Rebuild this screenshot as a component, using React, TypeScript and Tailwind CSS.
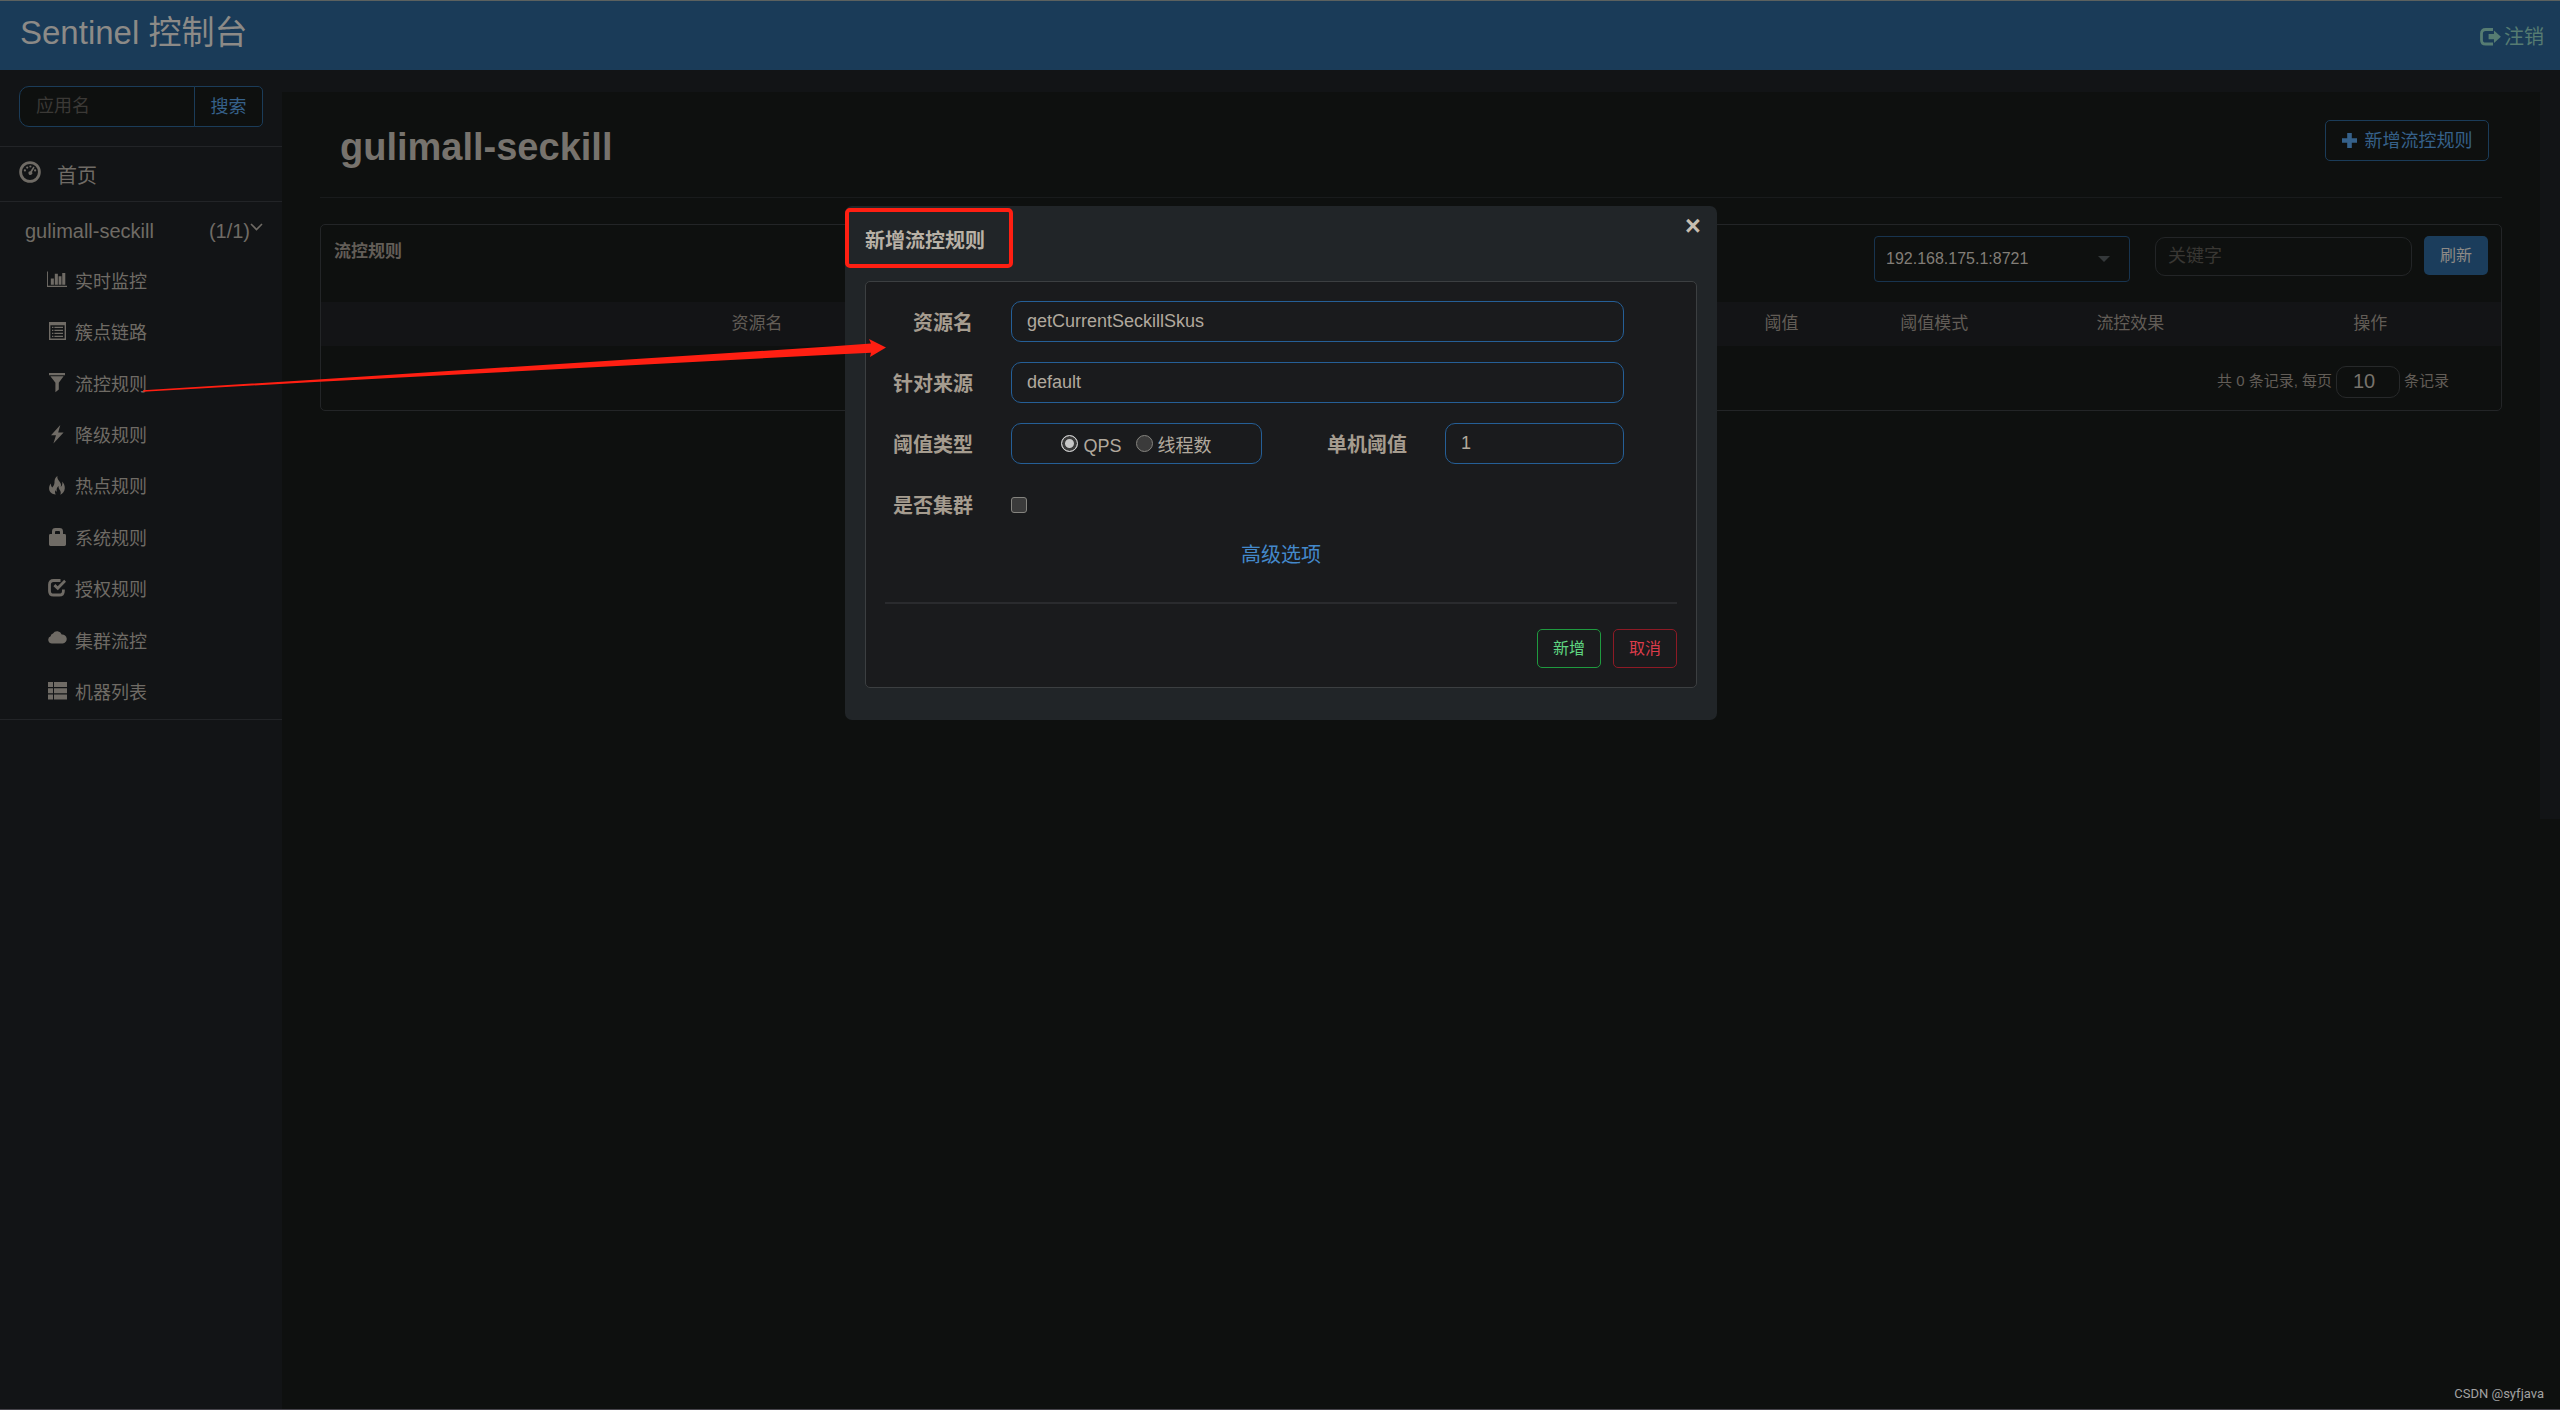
import React, { useState } from 'react';

type IconProps = { className?: string };

const DashboardIcon = ({ className }: IconProps) => (
  <svg viewBox="0 0 22 22" className={className} fill="currentColor" aria-hidden="true">
    <circle cx="11" cy="11" r="9.4" fill="none" stroke="currentColor" strokeWidth="2.8" />
    <circle cx="5.9" cy="9.4" r="1.1" />
    <circle cx="8.2" cy="6.6" r="1.1" />
    <circle cx="11.4" cy="5.5" r="1.1" />
    <circle cx="16.1" cy="9.4" r="1.1" />
    <path d="M14.4 5.6l1.2.9-2.6 4.6a1.9 1.9 0 1 1-1.7-.9z" />
  </svg>
);

const StatsIcon = ({ className }: IconProps) => (
  <svg viewBox="0 0 21 17" className={className} fill="currentColor" aria-hidden="true">
    <path d="M0 0h1v15h20v1.4H0zM4 7.5h3.2V14H4zM8.2 2.5h3.2V14H8.2zM12.2 5.2h3V14h-3zM16 1.8h3.2V14H16z" />
  </svg>
);

const ListAltIcon = ({ className }: IconProps) => (
  <svg viewBox="0 0 17 18" className={className} fill="currentColor" aria-hidden="true">
    <path fillRule="evenodd" d="M0 0h17v18H0zM1.4 3.2v13.4h14.2V3.2z" />
    <path d="M3 4.7h1.4v1.4H3zM5.4 4.7H14v1.4H5.4zM3 7.7h1.4v1.4H3zM5.4 7.7H14v1.4H5.4zM3 10.7h1.4v1.4H3zM5.4 10.7H14v1.4H5.4zM3 13.7h1.4v1.4H3zM5.4 13.7H14v1.4H5.4z" />
  </svg>
);

const FilterIcon = ({ className }: IconProps) => (
  <svg viewBox="0 0 16 20" className={className} fill="currentColor" aria-hidden="true">
    <path d="M0 0h16v2.2H0zM1.4 3.2h13.2L9.8 9.8v6.6l-3.4 2.8V9.8z" />
  </svg>
);

const FlashIcon = ({ className }: IconProps) => (
  <svg viewBox="0 0 13 19" className={className} fill="currentColor" aria-hidden="true">
    <path d="M9.3 0L0 10.2h5L2.4 18.6 12.6 7.4H7.2z" />
  </svg>
);

const FireIcon = ({ className }: IconProps) => (
  <svg viewBox="0 0 16 19" className={className} fill="currentColor" aria-hidden="true">
    <path d="M8.4 0c-.4 2.2.6 3.6 1.9 5.2 1.6 2 2.2 3.2 1.4 5.6 1.5-1.1 2-3.2 1.5-5.4 1.6 1.7 2.8 4.2 2.6 6.9-.2 3.2-2 5.4-4.6 6.5.8-1.6.8-3.3-.6-5.1-.9-1.2-1.2-2.2-.9-3.6-1.7 1.2-2.5 3.1-1.9 5.4-.8-.2-1.2-.8-1.3-1.6-.7 1.6-.6 3.2.3 4.7C2.9 18 .3 16 .1 12.7 0 10.5.8 9 1.8 7.6c.1 1.7.5 3 1.5 3.9C5.2 9.5 5.6 7.7 5.5 5.5 5.6 3.2 6.6 1.2 8.4 0z" />
  </svg>
);

const LockIcon = ({ className }: IconProps) => (
  <svg viewBox="0 0 17 18" className={className} fill="currentColor" aria-hidden="true">
    <path fillRule="evenodd" d="M3 6V3.4Q3 0 6.4 0h4.2Q14 0 14 3.4V6h1.6q1.4 0 1.4 1.4v9.2q0 1.4-1.4 1.4H1.4Q0 18 0 16.6V7.4Q0 6 1.4 6zm3 0h5V4q0-1-1-1H7Q6 3 6 4z" />
  </svg>
);

const CheckIcon = ({ className }: IconProps) => (
  <svg viewBox="0 0 18 18" className={className} fill="currentColor" aria-hidden="true">
    <path d="M12.5 1.5H5.6Q1.5 1.5 1.5 5.6v6.3q0 4.1 4.1 4.1h5.7q4.1 0 4.1-4.1v-1.4" fill="none" stroke="currentColor" strokeWidth="2.8" />
    <path d="M16.2.8L18 2.7l-8.2 8.6-4.4-4 1.900-2.200 2.400 2.200z" />
  </svg>
);

const CloudIcon = ({ className }: IconProps) => (
  <svg viewBox="0 0 19 13" className={className} fill="currentColor" aria-hidden="true">
    <path d="M4 12.5a3.8 3.8 0 0 1-1.4-7.3A3 3 0 0 1 5 2.5 4.9 4.9 0 0 1 13.7 3.5 4.5 4.5 0 1 1 14.7 12.5z" />
  </svg>
);

const ThListIcon = ({ className }: IconProps) => (
  <svg viewBox="0 0 19 18" className={className} fill="currentColor" aria-hidden="true">
    <path d="M0 0h5v5H0zM6 0h13v5H6zM0 6.3h5v5H0zM6 6.3h13v5H6zM0 12.6h5v5H0zM6 12.6h13v5H6z" />
  </svg>
);

const LogoutIcon = ({ className }: IconProps) => (
  <svg viewBox="0 0 21 18" className={className} fill="currentColor" aria-hidden="true">
    <path d="M13 1.5H5.6Q1.5 1.5 1.5 5.6v6.3q0 4.1 4.1 4.1H13" fill="none" stroke="currentColor" strokeWidth="2.8" />
    <path d="M14 2.4l6.9 6.3-6.9 6.2v-3.7H8.6V6.1H14z" />
  </svg>
);

const PlusIcon = ({ className }: IconProps) => (
  <svg viewBox="0 0 15 15" className={className} fill="currentColor" aria-hidden="true">
    <path d="M5.2 0h4.6v5.2H15v4.6H9.800V15H5.200V9.800H0V5.200h5.200z" />
  </svg>
);

const MENU = [
  { label: '实时监控', icon: <StatsIcon className="h-[17px] w-[21px]" /> },
  { label: '簇点链路', icon: <ListAltIcon className="h-[18px] w-[17px]" /> },
  { label: '流控规则', icon: <FilterIcon className="h-5 w-4" /> },
  { label: '降级规则', icon: <FlashIcon className="h-[19px] w-[13px]" /> },
  { label: '热点规则', icon: <FireIcon className="h-[19px] w-4" /> },
  { label: '系统规则', icon: <LockIcon className="h-[18px] w-[17px]" /> },
  { label: '授权规则', icon: <CheckIcon className="h-[18px] w-[18px]" /> },
  { label: '集群流控', icon: <CloudIcon className="mb-1 h-[13px] w-[19px]" /> },
  { label: '机器列表', icon: <ThListIcon className="h-[18px] w-[19px]" /> },
];

const COLUMNS = [
  { label: '资源名', width: 'w-[40%]' },
  { label: '', width: 'w-[24%]' },
  { label: '阈值', width: 'w-[6%]' },
  { label: '阈值模式', width: 'w-[8%]' },
  { label: '流控效果', width: 'w-[10%]' },
  { label: '操作', width: 'w-[12%]' },
];

const Sidebar = () => (
  <aside className="w-[282px] shrink-0 bg-[#121416] text-[#6f6b65]">
    <form className="flex px-[19px] pt-4 pb-[19px]" onSubmit={(e) => e.preventDefault()}>
      <input
        type="text"
        aria-label="应用名"
        placeholder="应用名"
        className="h-[41px] w-44 rounded-l-[10px] border border-[#1b3c59] bg-[#0e100f] px-4 text-lg outline-none placeholder:text-[#3b3936]"
      />
      <button type="submit" className="-ml-px h-[41px] flex-1 rounded-r-[5px] border border-[#1b3c59] bg-[#0e100f] text-lg text-[#36618a]">
        搜索
      </button>
    </form>
    <a href="#home" className="flex h-14 items-center border-y border-[#222427] pl-[19px] text-xl">
      <DashboardIcon className="mb-1 h-[22px] w-[22px]" />
      <span className="ml-4 pt-1">首页</span>
    </a>
    <a href="#app" className="flex h-[54px] items-center pt-1 pr-[19px] pl-[25px] text-xl">
      <span className="flex-1">gulimall-seckill</span>
      <span>(1/1)</span>
      <svg viewBox="0 0 13 8" className="mb-2 h-2 w-[13px]" fill="none" stroke="currentColor" strokeWidth="1.6" aria-hidden="true">
        <path d="M1 1l5.5 5.5L12 1" />
      </svg>
    </a>
    <ul className="flex h-[464px] flex-col border-b border-[#222427] text-lg">
      {MENU.map((item) => (
        <li key={item.label} className="flex-1">
          <a href={`#${item.label}`} className="flex h-full items-center pl-[47px]">
            <span className="flex w-5 justify-center pb-1">{item.icon}</span>
            <span className="ml-2">{item.label}</span>
          </a>
        </li>
      ))}
    </ul>
  </aside>
);

const RulesPanel = () => (
  <section className="mt-[26px] rounded-[5px] border border-[#232527]">
    <div className="flex h-[77px] items-start pt-[11px] pr-[13px] pl-[13px]">
      <h2 className="mt-1 flex-1 text-[17px] leading-6 font-bold text-[#625d57]">流控规则</h2>
      <div className="relative">
        <select aria-label="机器" className="h-[46px] w-64 appearance-none rounded-[4px] border border-[#18344f] bg-[#0e100f] px-[11px] text-base text-[#827e77] outline-none">
          <option>192.168.175.1:8721</option>
        </select>
        <svg viewBox="0 0 12 6" className="pointer-events-none absolute top-5 right-5 h-[6px] w-3" fill="#34383a" aria-hidden="true">
          <path d="M0 0h12L6 6z" />
        </svg>
      </div>
      <input
        type="text"
        aria-label="关键字"
        placeholder="关键字"
        className="mt-px ml-[25px] h-[39px] w-[257px] rounded-[10px] border border-[#232527] bg-transparent px-3 pb-px text-lg outline-none placeholder:text-[#393733]"
      />
      <button type="button" className="ml-3 h-[39px] w-16 rounded-[5px] bg-[#1b3d5c] text-base text-[#8d8a86]">
        刷新
      </button>
    </div>
    <table className="w-full table-fixed text-[17px] text-[#625d57]">
      <thead>
        <tr className="h-11 bg-[#131416]">
          {COLUMNS.map((col, i) => (
            <th key={i} scope="col" className={`${col.width} p-0 font-normal`}>
              {col.label}
            </th>
          ))}
        </tr>
      </thead>
    </table>
    <div className="flex h-16 items-center justify-end pt-[7px] pr-[52px] text-[15px] text-[#625d57]">
      <label htmlFor="pageSize">共 0 条记录, 每页</label>
      <input id="pageSize" type="text" defaultValue="10" className="mr-1 ml-1 h-8 w-16 rounded-[10px] border border-[#27292a] bg-transparent px-4 text-xl text-[#77736c] outline-none" />
      <span>条记录</span>
    </div>
  </section>
);

const fieldClass = 'h-[41px] rounded-[10px] border border-[#255f97] bg-transparent px-[15px] pb-px text-lg text-[#b1a99d] outline-none';
const labelClass = 'pt-2 pr-[38px] text-right text-xl font-bold text-[#a59c8f]';
const radioClass = 'h-[17px] w-[17px] appearance-none rounded-full border border-[#85847f] bg-[#3b3b3b] checked:border-[#cfcfcf] checked:bg-[#c8c8c8] checked:shadow-[inset_0_0_0_3px_#3b3b3b]';

const NewRuleDialog = () => {
  const [grade, setGrade] = useState('QPS');
  const [resource, setResource] = useState('getCurrentSeckillSkus');
  const [origin, setOrigin] = useState('default');

  return (
    <div className="absolute inset-x-0 top-0 flex justify-center pt-[206px] pl-0.5">
      <div role="dialog" aria-labelledby="dialogTitle" className="relative w-[872px] rounded-[7px] bg-[#212528] px-5 pb-8">
        <div className="absolute top-[2px] left-0 h-[60px] w-[168px] rounded-[5px] border-4 border-[#ff1f12]" />
        <button type="button" aria-label="关闭" className="absolute top-[5px] right-[12px] h-[30px] w-6 text-[27px] leading-[30px] font-bold text-[#c6bdb0]">
          ×
        </button>
        <h3 id="dialogTitle" className="h-[75px] pt-[21px] text-xl leading-7 font-bold text-[#b8b1a6]">新增流控规则</h3>
        <form className="rounded-[5px] border border-[#3c3f41] bg-[#1a1b1d] px-[19px] pt-[19px] pb-[19px]" onSubmit={(e) => e.preventDefault()}>
          <div className="grid grid-cols-[126px_251px_183px_179px] gap-y-5">
            <label htmlFor="resource" className={labelClass}>资源名</label>
            <input id="resource" type="text" value={resource} onChange={(e) => setResource(e.target.value)} className={`${fieldClass} col-span-3`} />
            <label htmlFor="origin" className={labelClass}>针对来源</label>
            <input id="origin" type="text" value={origin} onChange={(e) => setOrigin(e.target.value)} className={`${fieldClass} col-span-3`} />
            <span id="gradeLabel" className={labelClass}>阈值类型</span>
            <div role="radiogroup" aria-labelledby="gradeLabel" className="flex h-[41px] items-center justify-center rounded-[10px] border border-[#255f97] text-lg text-[#b1a99d]">
              <input id="gradeQps" type="radio" name="grade" checked={grade === 'QPS'} onChange={() => setGrade('QPS')} className={radioClass} />
              <label htmlFor="gradeQps" className="ml-[5px] pt-[5px]">QPS</label>
              <input id="gradeThread" type="radio" name="grade" checked={grade === 'THREAD'} onChange={() => setGrade('THREAD')} className={`${radioClass} ml-[14px]`} />
              <label htmlFor="gradeThread" className="ml-[5px] pt-[5px]">线程数</label>
            </div>
            <label htmlFor="count" className={labelClass}>单机阈值</label>
            <input id="count" type="text" defaultValue="1" className={fieldClass} />
            <label htmlFor="cluster" className={labelClass}>是否集群</label>
            <input id="cluster" type="checkbox" className="mt-[13px] h-4 w-4 appearance-none rounded-[3px] border border-[#85847f] bg-[#3b3b3b] checked:bg-[#4a90d0]" />
          </div>
          <div className="mt-[21px] text-center text-xl leading-7">
            <a href="#advanced" className="text-[#4489cb]">高级选项</a>
          </div>
          <hr className="mt-[33px] border-t-2 border-[#2a2b2e]" />
          <div className="mt-[25px] flex justify-end gap-3 text-base">
            <button type="submit" className="h-[39px] w-16 rounded-[5px] border border-[#1f9a3f] text-[#5fd681]">新增</button>
            <button type="button" className="h-[39px] w-16 rounded-[5px] border border-[#8d1a25] text-[#dc3c4b]">取消</button>
          </div>
        </form>
      </div>
    </div>
  );
};

const App: React.FC = () => (
  <div className="relative flex min-h-screen flex-col border-b border-[#46444b] bg-[#0e100f] font-['Liberation_Sans','Noto_Sans_CJK_SC',sans-serif]">
    <header className="flex h-[70px] items-center justify-between border-t border-[#5c615f] bg-[#1a3b58] pr-4 pl-5">
      <a href="#top" className="pb-[6px] text-[33px] leading-none text-[#8c8a87]">Sentinel 控制台</a>
      <a href="#logout" className="flex items-center gap-[3px] pt-[2px] text-xl text-[#567c72]">
        <LogoutIcon className="h-[18px] w-[21px]" />
        注销
      </a>
    </header>
    <div className="flex flex-1">
      <Sidebar />
      <div className="min-w-0 flex-1">
        <div className="bg-[#121416] pt-[22px] pr-5">
          <main className="min-h-[727px] bg-[#0e100f] pr-[38px] pl-[38px]">
            <div className="flex h-[106px] items-start justify-between border-b border-[#191b1c] pt-7 pr-[13px] pl-5">
              <h1 className="pt-[2px] text-[38px] leading-[50px] font-bold text-[#77736d]">gulimall-seckill</h1>
              <button type="button" className="flex h-[41px] w-[164px] items-center justify-center gap-2 rounded-[5px] border border-[#1b3c59] text-lg text-[#36618a]">
                <PlusIcon className="h-[15px] w-[15px]" />
                新增流控规则
              </button>
            </div>
            <RulesPanel />
          </main>
        </div>
      </div>
    </div>
    <NewRuleDialog />
    <svg className="pointer-events-none absolute top-0 left-0 h-[420px] w-[900px]" viewBox="0 0 900 420" fill="#ff1f12" aria-hidden="true">
      <path d="M143 390.3L310 380 830 346.5 871 343.5 869 339 886 347.5 870 357 871 352.8 830 354.7 310 382.3 143 391.7z" />
    </svg>
    <div className="absolute right-4 bottom-[7px] font-['Roboto','Liberation_Sans',sans-serif] text-[13px] leading-4 text-[#a2a2a2]">CSDN @syfjava</div>
  </div>
);

export default App;
